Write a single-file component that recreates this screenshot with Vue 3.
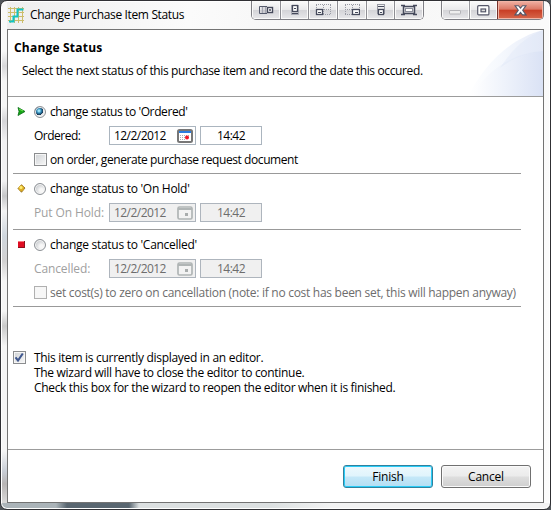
<script setup>
import { ref } from 'vue'

const choice = ref('ordered')
const sections = [
  { id: 'ordered', title: "change status to 'Ordered'", label: 'Ordered:', enabled: true, check: 'on order, generate purchase request document' },
  { id: 'hold', title: "change status to 'On Hold'", label: 'Put On Hold:', enabled: false },
  { id: 'cancelled', title: "change status to 'Cancelled'", label: 'Cancelled:', enabled: false, check: 'set cost(s) to zero on cancellation (note: if no cost has been set, this will happen anyway)' }
]
</script>

<template>
  <div class="window">
    <header class="titlebar">
      <svg class="app-icon" width="16" height="16" viewBox="0 0 16 16" fill="none">
        <path d="M2.5 0v16M6.5 0v16M10.5 0v16M14.5 0v16M0 1.5h16M0 5.5h16M0 9.5h16M0 13.5h16" stroke="#cdbd6a" />
        <path d="M1 14.500h4.500v-5h4v-7h6" stroke="#10c4c4" stroke-width="2" />
      </svg>
      <span class="title">Change Purchase Item Status</span>
      <div class="tools">
        <div class="tool"><svg width="16" height="12" viewBox="0 0 16 12" fill="none">
          <path d="M9 2.500H1.500v7H9" stroke="#555a6c" /><path d="M4.500 3v6M7.500 3v6" stroke="#a5a7b2" stroke-width="1.500" /><rect x="9.500" y="3.500" width="5" height="5" fill="#fff" stroke="#45495b" stroke-width="1.400" /><path d="M11 6h2" stroke="#45495b" stroke-width="1.500" />
        </svg></div>
        <div class="tool"><svg width="16" height="12" viewBox="0 0 16 12" fill="none">
          <path d="M4.500 11V1M11.500 11V1M4 10.500h8" stroke="#aaacb5" /><rect x="5.500" y="1.500" width="5" height="6" fill="#fff" stroke="#45495b" stroke-width="1.300" /><path d="M7 4.500h2M5 9.500h6" stroke="#45495b" />
        </svg></div>
        <div class="tool"><svg width="16" height="12" viewBox="0 0 16 12" fill="none">
          <path d="M1 .5h15M1.500 1v10M8.500 1v10M15.500 1v10M1 5.500h15M8 10.500h8" stroke="#999ba5" stroke-dasharray="1 1" /><rect x="1.500" y="5.500" width="6" height="5" fill="#fff" stroke="#45495b" stroke-width="1.300" /><path d="M3 8.500h3" stroke="#45495b" />
        </svg></div>
        <div class="tool"><svg width="16" height="12" viewBox="0 0 16 12" fill="none">
          <path d="M1 .5h15M1.500 1v10M8.500 1v10M15.500 1v10M1 5.500h15M1 10.500h8" stroke="#999ba5" stroke-dasharray="1 1" /><rect x="8.500" y="5.500" width="7" height="5" fill="#fff" stroke="#45495b" stroke-width="1.300" /><path d="M11 8.500h3" stroke="#45495b" />
        </svg></div>
        <div class="tool"><svg width="16" height="12" viewBox="0 0 16 12" fill="none">
          <path d="M4 .5h8M4.500 1v9M11.500 1v9" stroke="#999ba5" /><path d="M5 2.500h6" stroke="#45495b" /><rect x="5.500" y="5.500" width="5" height="5" fill="#fff" stroke="#45495b" stroke-width="1.300" /><path d="M7 8.500h2" stroke="#45495b" />
        </svg></div>
        <div class="tool"><svg width="16" height="12" viewBox="0 0 16 12" fill="none">
          <path d="M0 1.500h4M12 1.500h4M0 10.500h4M12 10.500h4M3 2.500h10M3 9.500h10M2.500 2v8M13.500 2v8" stroke="#45495b" stroke-width="1.500" /><rect x="4.500" y="4.500" width="7" height="3" fill="#fff" stroke="#8b8e9b" />
        </svg></div>
      </div>
      <div class="captions">
        <div class="cap min"><svg width="13" height="11" viewBox="0 0 13 11"><rect x=".5" y="5.500" width="11" height="3.500" rx=".5" fill="#eee" stroke="#b4b4b8" /></svg></div>
        <div class="cap max"><svg width="13" height="11" viewBox="0 0 13 11"><rect x=".7" y=".7" width="11.200" height="9.200" rx="1" fill="#fff" stroke="#555769" stroke-width="1.200" /><rect x="4" y="4" width="4.600" height="2.800" fill="#ddd" stroke="#555769" stroke-width="1.200" /></svg></div>
        <div class="cap close"><svg width="13" height="11" viewBox="0 0 13 11"><path d="M1 .7h3.500l2 2.400 2-2.400H12L8.700 5.200 12 9.900H8.500l-2-2.500-2 2.500H1l3.300-4.700z" fill="#fff" stroke="#565869" stroke-width="1.100" /></svg></div>
      </div>
    </header>

    <main class="client">
      <section class="banner">
        <svg class="swoosh" width="75" height="66" viewBox="0 0 75 66">
          <defs>
            <linearGradient id="outer" x1="0" x2="1"><stop offset="0" stop-color="#fff" /><stop offset=".45" stop-color="#f5f8fd" /><stop offset="1" stop-color="#e6ebf8" /></linearGradient>
            <linearGradient id="inner" x1="0" x2="1"><stop offset="0" stop-color="#fff" /><stop offset=".45" stop-color="#eff3fb" /><stop offset="1" stop-color="#dae2f5" /></linearGradient>
          </defs>
          <path d="M0 66C17 34 41 9 75 0V66Z" fill="url(#outer)" />
          <path d="M3 66C21 39 45 23 75 21V66Z" fill="url(#inner)" />
          <path d="M32 38C46 17 58 7 75 0V21C57 23 45 28 32 38Z" fill="#dee6f7" opacity=".35" />
        </svg>
        <h1>Change Status</h1>
        <p>Select the next status of this purchase item and record the date this occured.</p>
      </section>

      <section class="content">
        <div v-for="s in sections" :key="s.id" class="section" :class="s.id">
          <div class="choice" @click="choice = s.id">
            <svg class="marker" width="9" height="9" viewBox="0 0 9 9">
              <template v-if="s.id === 'ordered'"><path d="M1 .5 8 4.500 1 8.500 2 4.500Z" fill="#16a516" stroke="#096b16" stroke-width=".8" /><path d="m2 2 4 2" stroke="#6de651" /></template>
              <template v-else-if="s.id === 'hold'"><path d="M4.500 .7 8 4 4.500 8.300 1 4.500Z" fill="#c99b1a" stroke="#8e6a20" stroke-width=".8" /><circle cx="4.300" cy="4.200" r="2.600" fill="#dcae27" /><circle cx="4" cy="3.500" r="1.500" fill="#ffed73" /></template>
              <template v-else><rect x="1" y="1" width="7" height="7" fill="#e00d23" /><path d="M1 7.500h6.500V1" fill="none" stroke="#8b101b" /><path d="M1 1.500h6" stroke="#f87880" /></template>
            </svg>
            <span class="radio" :class="{ on: choice === s.id }"></span>
            <span class="choice-title">{{ s.title }}</span>
          </div>
          <div class="fields" :class="{ disabled: !s.enabled }">
            <span class="label">{{ s.label }}</span>
            <div class="date">
              <span>12/2/2012</span>
              <svg width="16" height="14" viewBox="0 0 16 14">
                <template v-if="s.enabled"><rect x="1" y="1" width="14" height="12" rx="1.500" fill="#fff" stroke="#777" stroke-width="2" /><path d="M2 3h12" stroke="#2a7de0" stroke-width="2" /><path d="M3 6.500h10M3 8.500h10M3 10.500h6" stroke="#a9adb5" stroke-dasharray="1 1" /><circle cx="10" cy="8.500" r="2" fill="#f01828" /></template>
                <template v-else><rect x="1" y="1" width="14" height="12" rx="1.500" fill="#f3f3f3" stroke="#b0b5b5" stroke-width="1.700" /><path d="M1 3h14" stroke="#b0b5b5" stroke-width="2" /><path d="M8 8.500h3" stroke="#a9adad" stroke-width="3" /></template>
              </svg>
            </div>
            <div class="time">14:42</div>
          </div>
          <div v-if="s.check" class="check-row" :class="{ disabled: !s.enabled }">
            <span class="checkbox"></span><span class="check-text">{{ s.check }}</span>
          </div>
        </div>

        <div class="notice">
          <span class="checkbox"><svg width="11" height="11" viewBox="0 0 11 11"><path d="M1.500 5.300 4 8.500 8.800 1.500" fill="none" stroke="#40588f" stroke-width="2.100" /></svg></span>
          <div class="notice-text">
            <div class="n1">This item is currently displayed in an editor.</div>
            <div class="n2">The wizard will have to close the editor to continue.</div>
            <div class="n3">Check this box for the wizard to reopen the editor when it is finished.</div>
          </div>
        </div>
      </section>

      <footer class="actions">
        <button class="primary">Finish</button>
        <button>Cancel</button>
      </footer>
    </main>
  </div>
</template>

<style>
body { margin: 0; overflow: hidden; background: #50555a; }
</style>

<style scoped>
* { box-sizing: border-box; }
.window {
  width: 551px; height: 510px; padding: 0 6px 6px;
  border: 1px solid #303034; border-radius: 7px;
  font: 12px/15px "Open Sans", "Noto Sans", sans-serif; letter-spacing: -.35px; color: #000;
  background:
    linear-gradient(90deg, #abb4b9 0 55px, #596670 66px 128px, #dce0e1 138px 270px, #f3f3f3 330px) 0 100% / 100% 6px no-repeat,
    linear-gradient(180deg, #f8f8f8 0 50px, #d8d8da 65px, #f5f5f5 80px 105px, #d5d5d8 120px, #f1f1f2 140px 180px, #c6c7c9 195px, #f3f3f3 210px, #cfd6dd 235px, #d2d1d1 260px, #f5f5f5 280px 310px, #c9c9c9 325px, #f5f5f5 345px 450px, #c9ced6 470px, #b8b5b5 483px, #e5e5e5) 0 0 / 6px 100% no-repeat,
    linear-gradient(100deg, #eee, #fbfbfb 30%, #f5f5f5 50%, #fcfcfc);
  box-shadow: inset 0 0 0 1px #fff;
}
.titlebar { height: 28px; display: flex; align-items: flex-start; }
.app-icon { margin: 6px 0 0 1px; flex: none; }
.title { width: 221px; margin: 6px 0 0 6px; flex: none; letter-spacing: -.35px; white-space: nowrap; }
.tools, .captions { display: flex; height: 19px; border: 1px solid #7e7e84; border-top: 0; border-radius: 0 0 5px 5px; overflow: hidden; flex: none; }
.tools { width: 173px; }
.tool, .cap { display: flex; align-items: center; justify-content: center; background: linear-gradient(#fbfbfb, #e9e9eb 48%, #d4d4d8 52%, #e8e8eb); box-shadow: inset 0 0 0 1px #fafafa; }
.tool { flex: 1; }
.tool svg { flex: none; }
.tool + .tool { border-left: 1px solid #8d8d93; }
.captions { width: 103px; margin-left: 17px; }
.min { width: 27px; }
.max { width: 28px; border-left: 1px solid #99999e; }
.close { flex: 1; border-left: 1px solid #76302a; background: linear-gradient(#f0b2a5, #db7865 46%, #c83d24 50%, #d7684c); box-shadow: inset 0 0 0 1px #f1b5a6; }
.client { width: 537px; height: 474px; border: 1px solid #737373; background: #fff; display: flex; flex-direction: column; }
.banner { position: relative; height: 67px; border-bottom: 1px solid #9c9c9c; padding: 10px 0 0 6px; }
.swoosh { position: absolute; right: 0; top: 0; display: block; }
h1 { margin: 0; font-size: 12px; line-height: 16px; font-weight: 700; letter-spacing: .2px; }
p { margin: 7px 0 0 8px; letter-spacing: -.37px; white-space: nowrap; }
.content { height: 353px; border-bottom: 1px solid #9c9c9c; padding: 6px 22px 0 5px; }
.section { border-bottom: 1px solid #999; white-space: nowrap; }
.ordered { height: 71px; }
.hold { height: 56px; padding-top: 6px; }
.cancelled { height: 77px; padding-top: 6px; }
.choice { height: 17px; display: flex; align-items: center; }
.choice-title { letter-spacing: -.28px; }
.ordered .choice-title { letter-spacing: -.4px; }
.marker { margin-left: 4px; flex: none; }
.radio { width: 12px; height: 12px; margin: 0 4px 0 8px; border: 1px solid #8d9196; border-radius: 50%; background: radial-gradient(circle at 65% 65%, #f7f7f7 20%, #c5c8cc 75%); box-shadow: inset 0 0 0 1px #f7f7f7; flex: none; }
.radio.on { background: radial-gradient(circle at 40% 38%, #9fe5fb 0 8%, #2a83b1 28%, #17314d 47%, #e8eaec 52%); }
.fields { height: 19px; margin: 6px 0 0 21px; display: flex; align-items: stretch; }
.label { width: 75px; padding-top: 2px; }
.ordered .label { letter-spacing: -.5px; }
.date, .time { border: 1px solid #abb5bf; background: #fff; }
.date { width: 87px; padding: 0 2px 0 4px; display: flex; justify-content: space-between; align-items: center; letter-spacing: -.55px; }
.time { width: 62px; margin-left: 4px; text-align: center; padding-top: 1px; letter-spacing: -.5px; }
.disabled .date, .disabled .time { background: #f0f0f0; border-color: #aeb5bd; }
.disabled { color: #6d6d6d; }
.disabled .label { color: #a0a0a0; letter-spacing: -.12px; }
.check-row { display: flex; height: 15px; margin: 7px 0 0 21px; align-items: center; }
.checkbox { width: 13px; height: 13px; border: 1px solid #8b8d8f; background: linear-gradient(135deg, #cfd2d5, #f8f8f8); box-shadow: inset 0 0 0 1px #f6f6f6; flex: none; }
.disabled .checkbox { border-color: #b0b0b0; background: #f7f7f7; }
.check-text { margin-left: 3px; letter-spacing: -.42px; }
.cancelled .check-text { letter-spacing: -.28px; }
.notice { display: flex; margin-top: 43px; }
.notice .checkbox { margin-top: 1px; }
.notice .checkbox svg { display: block; }
.notice-text { margin-left: 8px; white-space: nowrap; letter-spacing: -.3px; }
.n3 { letter-spacing: -.335px; }
.actions { flex: 1; display: flex; justify-content: flex-end; gap: 8px; padding: 15px 12px 0 0; }
button { width: 90px; height: 23px; padding: 0 0 1px; font: inherit; letter-spacing: -.2px; color: #000; border: 1px solid #707070; border-radius: 3px; background: linear-gradient(#f3f3f3, #ebebeb 49%, #dedede 51%, #cfcfcf); box-shadow: inset 0 0 0 1px #fafafa; }
.primary { border-color: #31819d; background: linear-gradient(#edf8fd, #e0f4fc 49%, #c5e8f8 51%, #b3def3); box-shadow: inset 0 0 0 1px #29ccf7; }
</style>
